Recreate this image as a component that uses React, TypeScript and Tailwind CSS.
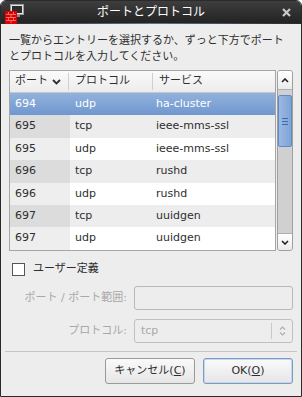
import React from 'react';

type Row = { port: string; proto: string; service: string };

const rows: Row[] = [
  { port: '694', proto: 'udp', service: 'ha-cluster' },
  { port: '695', proto: 'tcp', service: 'ieee-mms-ssl' },
  { port: '695', proto: 'udp', service: 'ieee-mms-ssl' },
  { port: '696', proto: 'tcp', service: 'rushd' },
  { port: '696', proto: 'udp', service: 'rushd' },
  { port: '697', proto: 'tcp', service: 'uuidgen' },
  { port: '697', proto: 'udp', service: 'uuidgen' },
];

const font = { fontFamily: '"DejaVu Sans", "Noto Sans CJK JP", sans-serif' };

function TitleIcon() {
  return (
    <svg width="19" height="20" viewBox="0 0 19 20">
      <rect x="5.5" y="0.5" width="13" height="10" fill="#e6e6e6" stroke="#9a9a9a" />
      <rect x="7" y="2" width="10" height="7" fill="#2c2c2c" />
      <rect x="9" y="11" width="6" height="2" fill="#8a8a8a" />
      <rect x="0" y="7" width="12" height="13" rx="1" fill="#e00000" />
      <path d="M1 10.5h10M1 13.5h10M1 16.5h10M3.5 8v2.5M8.5 8v2.5M6 10.5v3M3.5 13.5v3M8.5 13.5v3M6 16.5v2.5" stroke="#ff8080" strokeWidth="0.8" />
    </svg>
  );
}

export default function App() {
  return (
    <div
      className="flex h-[397px] w-[302px] flex-col overflow-hidden rounded-t-[6px] border border-[#2a2a2a] bg-[#ededed] text-[11px] text-[#2e2e2e]"
      style={font}
    >
      {/* title bar */}
      <div className="relative flex h-[22px] shrink-0 items-center justify-center bg-gradient-to-b from-[#3e3e3e] to-[#232323]">
        <div className="absolute left-[4px] top-[3px]">
          <TitleIcon />
        </div>
        <span className="text-[12px] text-white">ポートとプロトコル</span>
        <svg className="absolute right-[10px] top-[7px]" width="9" height="9" viewBox="0 0 9 9">
          <path d="M1 1L8 8M8 1L1 8" stroke="#c8c8c8" strokeWidth="2.2" />
        </svg>
      </div>
      <div className="h-[1px] shrink-0 bg-gradient-to-r from-[#2a2a2a] via-[#5d7395] to-[#2a2a2a]" />

      <div className="flex flex-1 flex-col px-[8px]">
        <p className="pt-[9px] leading-[16px]">
          <span className="whitespace-nowrap">一覧からエントリーを選択するか、ずっと下方でポート</span>
          <br />
          とプロトコルを入力してください。
        </p>

        {/* table + scrollbar */}
        <div className="mt-[5px] flex h-[181px]">
          <div className="flex-1 border border-[#a6a6a6] bg-white">
            <div className="flex h-[22px] items-center border-b border-[#c8c8c8] bg-gradient-to-b from-[#fafafa] to-[#ececec]">
              <div className="flex w-[59px] items-center gap-[4px] border-r border-[#cfcfcf] pl-[5px]">
                <span>ポート</span>
                <svg width="9" height="6" viewBox="0 0 9 6">
                  <path d="M1 1L4.5 4.5L8 1" stroke="#2e2e2e" strokeWidth="1.8" fill="none" />
                </svg>
              </div>
              <div className="w-[84px] border-r border-[#cfcfcf] pl-[6px]">プロトコル</div>
              <div className="pl-[6px]">サービス</div>
            </div>
            {rows.map((r, i) => {
              const sel = i === 0;
              const odd = i % 2 === 1;
              return (
                <div
                  key={i}
                  className={`flex h-[22.4px] items-center ${
                    sel
                      ? 'bg-gradient-to-b from-[#92b2dd] to-[#6f97cf] text-white'
                      : odd
                        ? 'bg-[#ededed]'
                        : 'bg-white'
                  }`}
                >
                  <div
                    className={`flex h-full w-[60px] items-center pl-[5px] ${
                      sel ? '' : odd ? 'bg-[#dcdcdc]' : 'bg-[#eeeeee]'
                    }`}
                  >
                    {r.port}
                  </div>
                  <div className="w-[84px] pl-[5px]">{r.proto}</div>
                  <div className="pl-[2px]">{r.service}</div>
                </div>
              );
            })}
          </div>

          {/* scrollbar */}
          <div className="ml-[1px] flex w-[16px] flex-col rounded-[3px] border border-[#a0a0a0] bg-[#d0d0d0]">
            <div className="flex h-[19px] items-center justify-center rounded-t-[2px] border-b border-[#b0b0b0] bg-gradient-to-b from-white to-[#ebebeb]">
              <svg width="8" height="5" viewBox="0 0 8 5">
                <path d="M1 4L4 1L7 4" stroke="#222" strokeWidth="1.6" fill="none" />
              </svg>
            </div>
            <div className="mt-[5px] flex h-[52px] items-center justify-center rounded-[2px] border border-[#5f89c4] bg-gradient-to-r from-[#9bb9e2] to-[#7fa3d6]">
              <svg width="6" height="7" viewBox="0 0 6 7">
                <path d="M0 0.5H6M0 3.5H6M0 6.5H6" stroke="#3f6aa8" strokeWidth="1" />
              </svg>
            </div>
            <div className="flex-1" />
            <div className="flex h-[17px] items-center justify-center rounded-b-[2px] border-t border-[#b0b0b0] bg-gradient-to-b from-white to-[#ebebeb]">
              <svg width="8" height="5" viewBox="0 0 8 5">
                <path d="M1 1L4 4L7 1" stroke="#222" strokeWidth="1.6" fill="none" />
              </svg>
            </div>
          </div>
        </div>

        {/* custom */}
        <div className="mt-[10px] flex h-[17px] items-center gap-[8px] pl-[3px]">
          <div className="h-[13px] w-[13px] border border-[#555] bg-white" />
          <span>ユーザー定義</span>
        </div>

        <div className="mt-[8px] flex items-center">
          <span className="w-[120px] pr-[2px] text-right text-[#a8a8a8]">ポート / ポート範囲:</span>
          <div className="ml-[5px] h-[24px] flex-1 rounded-[3px] border border-[#b8b8b8] bg-[#ededed]" />
        </div>

        <div className="mt-[9px] flex items-center">
          <span className="w-[120px] pr-[2px] text-right text-[#a8a8a8]">プロトコル:</span>
          <div className="ml-[5px] flex h-[24px] flex-1 items-center rounded-[3px] border border-[#c0c0c0] bg-[#ededed]">
            <span className="flex-1 pl-[6px] text-[#a8a8a8]">tcp</span>
            <div className="flex h-[16px] w-[21px] flex-col items-center justify-center gap-[2px] border-l border-[#c8c8c8]">
              <svg width="7" height="4" viewBox="0 0 7 4">
                <path d="M1 3.5L3.5 1L6 3.5" stroke="#b0b0b0" strokeWidth="1.2" fill="none" />
              </svg>
              <svg width="7" height="4" viewBox="0 0 7 4">
                <path d="M1 0.5L3.5 3L6 0.5" stroke="#b0b0b0" strokeWidth="1.2" fill="none" />
              </svg>
            </div>
          </div>
        </div>

        <div className="-mx-[4px] mt-[8px] h-[1px] bg-[#c6c6c6]" />

        <div className="mt-[6px] flex justify-end gap-[8px]">
          <button className="h-[26px] w-[90px] rounded-[3px] border border-[#9a9a9a] bg-gradient-to-b from-[#fafafa] to-[#e6e6e6] text-[#2e2e2e]">
            キャンセル(<span className="underline">C</span>)
          </button>
          <button className="h-[26px] w-[90px] rounded-[3px] border border-[#7b9ac4] bg-gradient-to-b from-[#fafafa] to-[#e6e6e6] text-[#2e2e2e] shadow-[inset_0_0_0_1px_#c7d6ea]">
            OK(<span className="underline">O</span>)
          </button>
        </div>
      </div>
    </div>
  );
}
